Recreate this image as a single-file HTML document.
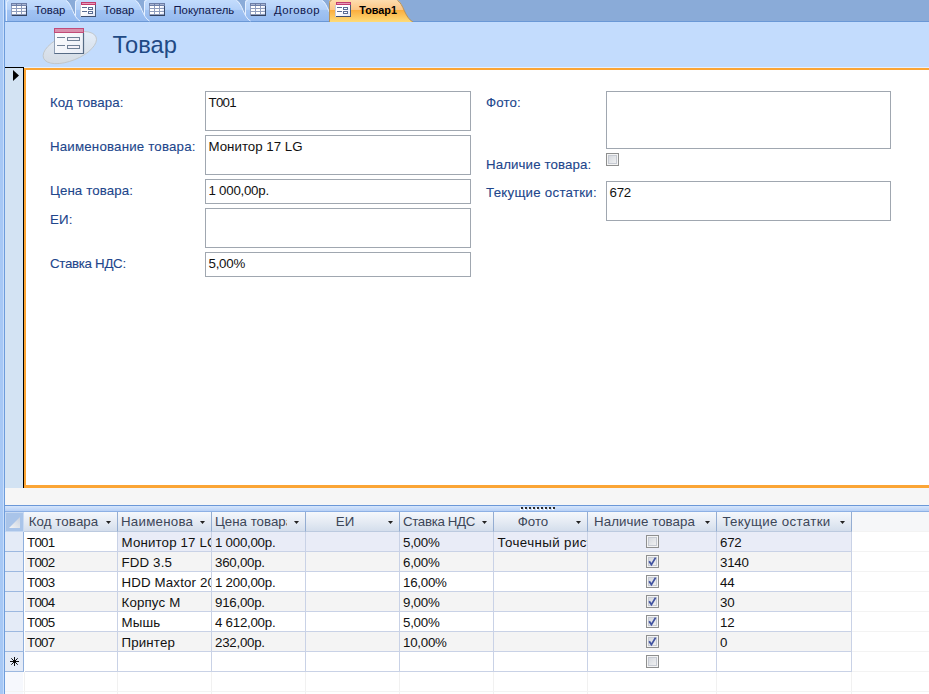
<!DOCTYPE html>
<html><head><meta charset="utf-8"><title>Товар1</title>
<style>
html,body{margin:0;padding:0}
body{width:929px;height:694px;overflow:hidden;background:#fff;position:relative;font-family:"Liberation Sans",sans-serif;}
.abs,.lbl,.tb,.hc,.c,.rs,.vl,.hl{position:absolute}
#leftstrip{left:0;top:0;width:5px;height:694px;background:linear-gradient(90deg,#a7c8f5 0,#a7c8f5 3px,#c8defc 3px,#c8defc 4px,#6d9cdb 4px)}
#tabbar{left:5px;top:0;width:924px;height:22px}
#hdr{left:5px;top:22px;width:924px;height:45px;background:#c3dcfd;border-bottom:1px solid #e6f0fe}
#title{left:112.5px;top:31px;font-size:23.7px;color:#1f4a85;line-height:28px;white-space:nowrap}
#hicon{left:38px;top:22px;width:68px;height:46px}
#detail{left:24px;top:68px;width:903px;height:415px;border-left:2px solid #fba535;border-top:2px solid #fba535;border-bottom:3px solid #fba535;background:#fff}
#recsel{left:5px;top:67px;width:19px;height:421px;background:#d3e3f3;border-top:1px solid #000;border-right:1px solid #000;box-sizing:border-box}
#recarrow{left:13px;top:70px;width:6px;height:11px;background:#000;clip-path:polygon(0 0,100% 50%,0 100%)}
.lbl{font-size:13.3px;color:#21468b;white-space:nowrap;line-height:16px;letter-spacing:0.1px;-webkit-text-stroke:0.1px #21468b}
.tb{border:1px solid #a0a7b0;background:#fff;box-sizing:border-box;font-size:13.3px;color:#111;line-height:16px;padding:3px 0 0 2.5px;white-space:nowrap}
.num{letter-spacing:-0.25px}
.code{letter-spacing:-0.7px}
#gap{left:5px;top:488px;width:924px;height:17px;background:#f6f6f6}
#split{left:5px;top:505px;width:924px;height:7px;background:linear-gradient(180deg,#6b98d8 0,#6b98d8 1px,#d6e6fc 1px,#b7d0f6 6px,#8db0e4 6px)}
#grip{left:520px;top:506px;width:40px;height:4px}
#grid{left:5px;top:512px;width:924px;height:182px;background:#fff}
.hc{top:512px;height:19px;background:linear-gradient(180deg,#f5f8fc 0,#e4eaf3 55%,#d4deec 100%);border-right:1px solid #94add2;border-bottom:1px solid #bccadf;font-size:13.3px;color:#3c4658;line-height:19px;white-space:nowrap;overflow:hidden}
.hc span{position:absolute;top:0;overflow:hidden;height:19px}
.hc i{position:absolute;top:9px;width:5px;height:3px;background:#222;clip-path:polygon(0 0,100% 0,50% 100%)}
.c{height:19px;border-right:1px solid #c9d2e6;border-bottom:1px solid #c9d2e6;font-size:13.3px;color:#111;line-height:20px;white-space:nowrap;overflow:hidden;box-sizing:content-box}
.c span{position:absolute;left:3.5px;top:1px}
.c span.code{left:2px}
.c span.num{left:3px}
.rs{left:5px;width:18px;height:19px;background:#e4ebf7;border-right:1px solid #8fafdc;border-bottom:1px solid #9cb8e0}
.cb{position:absolute;width:11px;height:11px;border:1px solid #8e8f8f;background:linear-gradient(135deg,#cfd3da 0,#f6f6f6 100%);box-shadow:inset 0 0 0 1px #f4f4f4,inset 0 0 0 2px #c6cad2}
.vl{width:1px;background:#f1f1f1}
.hl{height:1px;background:#f3f3f3}
</style></head><body>
<div id="leftstrip" class="abs"></div>
<svg id="tabbar" class="abs" width="924" height="22" viewBox="5 0 924 22">
<defs><linearGradient id="tg" x1="0" y1="0" x2="0" y2="1"><stop offset="0" stop-color="#c3dcfc"/><stop offset="0.45" stop-color="#b4d1f9"/><stop offset="0.47" stop-color="#a2c4f3"/><stop offset="1" stop-color="#95baef"/></linearGradient><linearGradient id="ag" x1="0" y1="0" x2="0" y2="1"><stop offset="0" stop-color="#fddcae"/><stop offset="0.44" stop-color="#fcc685"/><stop offset="0.47" stop-color="#fbae3e"/><stop offset="1" stop-color="#fedb78"/></linearGradient><linearGradient id="cg" x1="0" y1="0" x2="1" y2="1"><stop offset="0.3" stop-color="#fff"/><stop offset="1" stop-color="#cfd9f6"/></linearGradient><linearGradient id="fg" x1="0" y1="0" x2="1" y2="1"><stop offset="0.4" stop-color="#fff"/><stop offset="1" stop-color="#e0e5f5"/></linearGradient></defs>
<rect x="5" y="0" width="924" height="21" fill="#8aabd8"/>
<rect x="5" y="21" width="924" height="1" fill="#6a98d6"/>
<path d="M245 21V2Q245 0 247 0H322C328 3 329 17 336 21Z" fill="url(#tg)"/><path d="M245.5 21V2.5Q245.5 0.5 247.5 0.5M322 0.5C328 3.5 329 17.5 336 21" fill="none" stroke="#e6f0ff" stroke-width="1"/>
<path d="M144 21V2Q144 0 146 0H236.5C242.5 3 243.5 17 250.5 21Z" fill="url(#tg)"/><path d="M144.5 21V2.5Q144.5 0.5 146.5 0.5M236.5 0.5C242.5 3.5 243.5 17.5 250.5 21" fill="none" stroke="#e6f0ff" stroke-width="1"/>
<path d="M75 21V2Q75 0 77 0H135.5C141.5 3 142.5 17 149.5 21Z" fill="url(#tg)"/><path d="M75.5 21V2.5Q75.5 0.5 77.5 0.5M135.5 0.5C141.5 3.5 142.5 17.5 149.5 21" fill="none" stroke="#e6f0ff" stroke-width="1"/>
<rect x="5" y="0" width="2" height="21" fill="url(#tg)"/><path d="M6 21V2Q6 0 8 0H66C72 3 73 17 80 21Z" fill="url(#tg)"/><path d="M6.5 21V2.5Q6.5 0.5 8.5 0.5M66 0.5C72 3.5 73 17.5 80 21" fill="none" stroke="#e6f0ff" stroke-width="1"/>
<path d="M329 22V2Q329 0 331 0H397.5C403.5 3 404.5 17 413.0 22Z" fill="url(#ag)"/><path d="M329.5 22V2.5Q329.5 0.5 331.5 0.5M397.5 0.5C403.5 3.5 404.5 17.5 413.0 22" fill="none" stroke="#b8935a" stroke-width="1"/>
<g transform="translate(11,3)" shape-rendering="crispEdges"><rect x="0" y="0" width="16" height="13" fill="#8f9dbd"/><rect x="0" y="0" width="16" height="3" fill="#6d7fa8"/><rect x="1" y="1" width="4" height="1" fill="#aab6d2"/><rect x="6" y="1" width="4" height="1" fill="#aab6d2"/><rect x="11" y="1" width="4" height="1" fill="#aab6d2"/><rect x="1" y="3" width="4" height="2" fill="#fff"/><rect x="6" y="3" width="4" height="2" fill="#fff"/><rect x="11" y="3" width="4" height="2" fill="url(#cg)"/><rect x="1" y="6" width="4" height="2" fill="#fff"/><rect x="6" y="6" width="4" height="2" fill="#fff"/><rect x="11" y="6" width="4" height="2" fill="url(#cg)"/><rect x="1" y="9" width="4" height="2" fill="#fff"/><rect x="6" y="9" width="4" height="2" fill="#fff"/><rect x="11" y="9" width="4" height="2" fill="url(#cg)"/><rect x="15" y="3" width="1" height="10" fill="#3a4a68"/><rect x="1" y="12" width="15" height="1" fill="#34435f"/></g><g transform="translate(80,2)" shape-rendering="crispEdges"><rect x="0" y="3" width="16" height="12" fill="url(#fg)"/><rect x="0" y="3" width="1" height="12" fill="#c9cedb"/><rect x="1" y="0" width="15" height="3" fill="#c23c6e"/><rect x="2" y="1" width="13" height="1" fill="#e59ab8"/><rect x="15" y="3" width="1" height="12" fill="#4a5c7c"/><rect x="1" y="14" width="15" height="1" fill="#3f506f"/><rect x="2" y="5" width="5" height="1" fill="#5a6d94"/><rect x="8" y="5" width="5" height="3" fill="#5a6d94"/><rect x="9" y="6" width="3" height="1" fill="#fff"/><rect x="2" y="9" width="5" height="1" fill="#5a6d94"/><rect x="8" y="9" width="5" height="3" fill="#5a6d94"/><rect x="9" y="10" width="3" height="1" fill="#fff"/></g><g transform="translate(149,3)" shape-rendering="crispEdges"><rect x="0" y="0" width="16" height="13" fill="#8f9dbd"/><rect x="0" y="0" width="16" height="3" fill="#6d7fa8"/><rect x="1" y="1" width="4" height="1" fill="#aab6d2"/><rect x="6" y="1" width="4" height="1" fill="#aab6d2"/><rect x="11" y="1" width="4" height="1" fill="#aab6d2"/><rect x="1" y="3" width="4" height="2" fill="#fff"/><rect x="6" y="3" width="4" height="2" fill="#fff"/><rect x="11" y="3" width="4" height="2" fill="url(#cg)"/><rect x="1" y="6" width="4" height="2" fill="#fff"/><rect x="6" y="6" width="4" height="2" fill="#fff"/><rect x="11" y="6" width="4" height="2" fill="url(#cg)"/><rect x="1" y="9" width="4" height="2" fill="#fff"/><rect x="6" y="9" width="4" height="2" fill="#fff"/><rect x="11" y="9" width="4" height="2" fill="url(#cg)"/><rect x="15" y="3" width="1" height="10" fill="#3a4a68"/><rect x="1" y="12" width="15" height="1" fill="#34435f"/></g><g transform="translate(250,3)" shape-rendering="crispEdges"><rect x="0" y="0" width="16" height="13" fill="#8f9dbd"/><rect x="0" y="0" width="16" height="3" fill="#6d7fa8"/><rect x="1" y="1" width="4" height="1" fill="#aab6d2"/><rect x="6" y="1" width="4" height="1" fill="#aab6d2"/><rect x="11" y="1" width="4" height="1" fill="#aab6d2"/><rect x="1" y="3" width="4" height="2" fill="#fff"/><rect x="6" y="3" width="4" height="2" fill="#fff"/><rect x="11" y="3" width="4" height="2" fill="url(#cg)"/><rect x="1" y="6" width="4" height="2" fill="#fff"/><rect x="6" y="6" width="4" height="2" fill="#fff"/><rect x="11" y="6" width="4" height="2" fill="url(#cg)"/><rect x="1" y="9" width="4" height="2" fill="#fff"/><rect x="6" y="9" width="4" height="2" fill="#fff"/><rect x="11" y="9" width="4" height="2" fill="url(#cg)"/><rect x="15" y="3" width="1" height="10" fill="#3a4a68"/><rect x="1" y="12" width="15" height="1" fill="#34435f"/></g><g transform="translate(335,2)" shape-rendering="crispEdges"><rect x="0" y="3" width="16" height="12" fill="url(#fg)"/><rect x="0" y="3" width="1" height="12" fill="#c9cedb"/><rect x="1" y="0" width="15" height="3" fill="#c23c6e"/><rect x="2" y="1" width="13" height="1" fill="#e59ab8"/><rect x="15" y="3" width="1" height="12" fill="#4a5c7c"/><rect x="1" y="14" width="15" height="1" fill="#3f506f"/><rect x="2" y="5" width="5" height="1" fill="#5a6d94"/><rect x="8" y="5" width="5" height="3" fill="#5a6d94"/><rect x="9" y="6" width="3" height="1" fill="#fff"/><rect x="2" y="9" width="5" height="1" fill="#5a6d94"/><rect x="8" y="9" width="5" height="3" fill="#5a6d94"/><rect x="9" y="10" width="3" height="1" fill="#fff"/></g>
<text x="34.5" y="14" font-family="Liberation Sans, sans-serif" font-size="11.3" fill="#10164a">Товар</text><text x="103.5" y="14" font-family="Liberation Sans, sans-serif" font-size="11.3" fill="#10164a">Товар</text><text x="173.5" y="14" font-family="Liberation Sans, sans-serif" font-size="11.3" fill="#10164a">Покупатель</text><text x="274" y="14" font-family="Liberation Sans, sans-serif" font-size="11.3" fill="#10164a" letter-spacing="0.47">Договор</text><text x="359.3" y="14" font-family="Liberation Sans, sans-serif" font-size="10.8" font-weight="bold" fill="#000">Товар1</text>
</svg>
<div id="hdr" class="abs"></div>
<svg id="hicon" class="abs" width="68" height="46" viewBox="38 22 68 46">
<defs><linearGradient id="eg" x1="0" y1="1" x2="1" y2="0"><stop offset="0" stop-color="#d2d8df"/><stop offset="0.6" stop-color="#dde6f1"/><stop offset="1" stop-color="#e9f2fe"/></linearGradient>
<linearGradient id="bg2" x1="0" y1="0" x2="1" y2="1"><stop offset="0" stop-color="#ffffff"/><stop offset="1" stop-color="#e9edf6"/></linearGradient></defs>
<ellipse cx="69.8" cy="47.6" rx="28.3" ry="13" transform="rotate(-22 69.8 47.6)" fill="url(#eg)" stroke="#bfc3c6" stroke-width="0.8"/>
<rect x="54.5" y="28.5" width="29" height="25" fill="url(#bg2)" stroke="#8f9fb5"/>
<path d="M83.5 33V53.5H54.5" fill="none" stroke="#566b85" stroke-width="1.2"/>
<rect x="54" y="28" width="30" height="5" fill="#c24b78"/>
<rect x="55" y="29" width="28" height="3" fill="#d890ad"/>
<path d="M57 37.5H65M57 45.5H65" stroke="#6f8096" stroke-width="1" fill="none"/>
<rect x="67.5" y="37.5" width="12" height="3" fill="#f3f1f8" stroke="#6f8096"/>
<rect x="67.5" y="45.5" width="12" height="3" fill="#f3f1f8" stroke="#6f8096"/>
</svg>
<div id="title" class="abs">Товар</div>
<div id="recsel" class="abs"></div><div id="recarrow" class="abs"></div>
<div id="detail" class="abs"></div>
<div class="lbl" style="left:50px;top:95px">Код товара:</div>
<div class="lbl" style="left:50px;top:139px;letter-spacing:0.18px">Наименование товара:</div>
<div class="lbl" style="left:50px;top:183px">Цена товара:</div>
<div class="lbl" style="left:50px;top:212px">ЕИ:</div>
<div class="lbl" style="left:50px;top:256px;letter-spacing:-0.3px">Ставка НДС:</div>
<div class="tb code" style="left:205px;top:91px;width:266px;height:40px">T001</div>
<div class="tb " style="left:205px;top:135px;width:266px;height:40px">Монитор 17 LG</div>
<div class="tb num" style="left:205px;top:179px;width:266px;height:25px">1 000,00р.</div>
<div class="tb " style="left:205px;top:208px;width:266px;height:40px"></div>
<div class="tb num" style="left:205px;top:252px;width:266px;height:25px">5,00%</div>
<div class="lbl" style="left:486px;top:95px">Фото:</div>
<div class="lbl" style="left:486px;top:157px">Наличие товара:</div>
<div class="lbl" style="left:486px;top:185px;letter-spacing:0.25px">Текущие остатки:</div>
<div class="tb " style="left:606px;top:91px;width:285px;height:58px"></div>
<div class="cb" style="left:606px;top:153px"></div>
<div class="tb num" style="left:606px;top:181px;width:285px;height:40px">672</div>
<div id="gap" class="abs"></div>
<div id="split" class="abs"></div>
<svg id="grip" class="abs" width="40" height="4" viewBox="0 0 40 4"><rect x="0" y="2" width="2" height="2" fill="#fff"/><rect x="1" y="1" width="2" height="2" fill="#2b2b2b"/><rect x="4" y="2" width="2" height="2" fill="#fff"/><rect x="5" y="1" width="2" height="2" fill="#2b2b2b"/><rect x="8" y="2" width="2" height="2" fill="#fff"/><rect x="9" y="1" width="2" height="2" fill="#2b2b2b"/><rect x="12" y="2" width="2" height="2" fill="#fff"/><rect x="13" y="1" width="2" height="2" fill="#2b2b2b"/><rect x="16" y="2" width="2" height="2" fill="#fff"/><rect x="17" y="1" width="2" height="2" fill="#2b2b2b"/><rect x="20" y="2" width="2" height="2" fill="#fff"/><rect x="21" y="1" width="2" height="2" fill="#2b2b2b"/><rect x="24" y="2" width="2" height="2" fill="#fff"/><rect x="25" y="1" width="2" height="2" fill="#2b2b2b"/><rect x="28" y="2" width="2" height="2" fill="#fff"/><rect x="29" y="1" width="2" height="2" fill="#2b2b2b"/><rect x="32" y="2" width="2" height="2" fill="#fff"/><rect x="33" y="1" width="2" height="2" fill="#2b2b2b"/></svg>
<div id="grid" class="abs"></div>
<div class="abs" style="left:5px;top:512px;width:19px;height:20px;background:#a9c4e9;box-sizing:border-box;border:1px solid #c7d9f2"></div>
<svg class="abs" style="left:9px;top:517px" width="12" height="12" viewBox="0 0 12 12"><defs><linearGradient id="sg" x1="0" y1="1" x2="1" y2="0"><stop offset="0" stop-color="#f4f4f4"/><stop offset="1" stop-color="#c9d2e0"/></linearGradient></defs><path d="M11 0V11H0Z" fill="url(#sg)"/></svg>
<div class="hc" style="left:24px;width:1px;border-right:0"></div>
<div class="hc" style="left:25px;width:92px"><span style="left:0;width:77px;text-align:center;letter-spacing:0.1px">Код товара</span><i style="left:81px"></i></div>
<div class="hc" style="left:118px;width:93px"><span style="left:3px;width:72px;letter-spacing:0.25px">Наименование товара</span><i style="left:82px"></i></div>
<div class="hc" style="left:212px;width:93px"><span style="left:3px;width:72px">Цена товара</span><i style="left:82px"></i></div>
<div class="hc" style="left:306px;width:93px"><span style="left:0;width:78px;text-align:center">ЕИ</span><i style="left:82px"></i></div>
<div class="hc" style="left:400px;width:93px"><span style="left:0;width:78px;text-align:center;letter-spacing:-0.34px">Ставка НДС</span><i style="left:82px"></i></div>
<div class="hc" style="left:494px;width:93px"><span style="left:0;width:78px;text-align:center">Фото</span><i style="left:82px"></i></div>
<div class="hc" style="left:588px;width:128px"><span style="left:0;width:113px;text-align:center;letter-spacing:0.05px">Наличие товара</span><i style="left:117px"></i></div>
<div class="hc" style="left:717px;width:134px"><span style="left:0;width:119px;text-align:center;letter-spacing:0.33px">Текущие остатки</span><i style="left:123px"></i></div>
<div class="abs" style="left:852px;top:512px;width:77px;height:20px;background:#f6f7f9"></div>
<div class="rs" style="top:532px"></div>
<div class="c" style="left:25px;top:532px;width:92px;background:#fff"><span class="code">T001</span></div>
<div class="c" style="left:118px;top:532px;width:93px;background:#e9ecf7"><span style="letter-spacing:0.15px">Монитор 17 LG</span></div>
<div class="c" style="left:212px;top:532px;width:93px;background:#e9ecf7"><span class="num">1 000,00р.</span></div>
<div class="c" style="left:306px;top:532px;width:93px;background:#e9ecf7"></div>
<div class="c" style="left:400px;top:532px;width:93px;background:#e9ecf7"><span class="num">5,00%</span></div>
<div class="c" style="left:494px;top:532px;width:93px;background:#e9ecf7"><span style="letter-spacing:0.4px">Точечный рисунок</span></div>
<div class="c" style="left:588px;top:532px;width:128px;background:#e9ecf7"><div class="cb" style="left:58px;top:3px"></div></div>
<div class="c" style="left:717px;top:532px;width:134px;background:#e9ecf7"><span class="num">672</span></div>
<div class="rs" style="top:552px"></div>
<div class="c" style="left:25px;top:552px;width:92px;background:#f4f4f4"><span class="code">T002</span></div>
<div class="c" style="left:118px;top:552px;width:93px;background:#f4f4f4"><span style="letter-spacing:0.15px">FDD 3.5</span></div>
<div class="c" style="left:212px;top:552px;width:93px;background:#f4f4f4"><span class="num">360,00р.</span></div>
<div class="c" style="left:306px;top:552px;width:93px;background:#f4f4f4"></div>
<div class="c" style="left:400px;top:552px;width:93px;background:#f4f4f4"><span class="num">6,00%</span></div>
<div class="c" style="left:494px;top:552px;width:93px;background:#f4f4f4"></div>
<div class="c" style="left:588px;top:552px;width:128px;background:#f4f4f4"><div class="cb" style="left:58px;top:3px"><svg width="11" height="11" viewBox="0 0 11 11" style="position:absolute;left:0;top:0"><path d="M2.2 5.2L4.4 8.6L8.6 1.6" fill="none" stroke="#4052a0" stroke-width="1.8"/></svg></div></div>
<div class="c" style="left:717px;top:552px;width:134px;background:#f4f4f4"><span class="num">3140</span></div>
<div class="rs" style="top:572px"></div>
<div class="c" style="left:25px;top:572px;width:92px;background:#fff"><span class="code">T003</span></div>
<div class="c" style="left:118px;top:572px;width:93px;background:#fff"><span style="letter-spacing:0.15px">HDD Maxtor 20</span></div>
<div class="c" style="left:212px;top:572px;width:93px;background:#fff"><span class="num">1 200,00р.</span></div>
<div class="c" style="left:306px;top:572px;width:93px;background:#fff"></div>
<div class="c" style="left:400px;top:572px;width:93px;background:#fff"><span class="num">16,00%</span></div>
<div class="c" style="left:494px;top:572px;width:93px;background:#fff"></div>
<div class="c" style="left:588px;top:572px;width:128px;background:#fff"><div class="cb" style="left:58px;top:3px"><svg width="11" height="11" viewBox="0 0 11 11" style="position:absolute;left:0;top:0"><path d="M2.2 5.2L4.4 8.6L8.6 1.6" fill="none" stroke="#4052a0" stroke-width="1.8"/></svg></div></div>
<div class="c" style="left:717px;top:572px;width:134px;background:#fff"><span class="num">44</span></div>
<div class="rs" style="top:592px"></div>
<div class="c" style="left:25px;top:592px;width:92px;background:#f4f4f4"><span class="code">T004</span></div>
<div class="c" style="left:118px;top:592px;width:93px;background:#f4f4f4"><span style="letter-spacing:0.15px">Корпус М</span></div>
<div class="c" style="left:212px;top:592px;width:93px;background:#f4f4f4"><span class="num">916,00р.</span></div>
<div class="c" style="left:306px;top:592px;width:93px;background:#f4f4f4"></div>
<div class="c" style="left:400px;top:592px;width:93px;background:#f4f4f4"><span class="num">9,00%</span></div>
<div class="c" style="left:494px;top:592px;width:93px;background:#f4f4f4"></div>
<div class="c" style="left:588px;top:592px;width:128px;background:#f4f4f4"><div class="cb" style="left:58px;top:3px"><svg width="11" height="11" viewBox="0 0 11 11" style="position:absolute;left:0;top:0"><path d="M2.2 5.2L4.4 8.6L8.6 1.6" fill="none" stroke="#4052a0" stroke-width="1.8"/></svg></div></div>
<div class="c" style="left:717px;top:592px;width:134px;background:#f4f4f4"><span class="num">30</span></div>
<div class="rs" style="top:612px"></div>
<div class="c" style="left:25px;top:612px;width:92px;background:#fff"><span class="code">T005</span></div>
<div class="c" style="left:118px;top:612px;width:93px;background:#fff"><span style="letter-spacing:0.15px">Мышь</span></div>
<div class="c" style="left:212px;top:612px;width:93px;background:#fff"><span class="num">4 612,00р.</span></div>
<div class="c" style="left:306px;top:612px;width:93px;background:#fff"></div>
<div class="c" style="left:400px;top:612px;width:93px;background:#fff"><span class="num">5,00%</span></div>
<div class="c" style="left:494px;top:612px;width:93px;background:#fff"></div>
<div class="c" style="left:588px;top:612px;width:128px;background:#fff"><div class="cb" style="left:58px;top:3px"><svg width="11" height="11" viewBox="0 0 11 11" style="position:absolute;left:0;top:0"><path d="M2.2 5.2L4.4 8.6L8.6 1.6" fill="none" stroke="#4052a0" stroke-width="1.8"/></svg></div></div>
<div class="c" style="left:717px;top:612px;width:134px;background:#fff"><span class="num">12</span></div>
<div class="rs" style="top:632px"></div>
<div class="c" style="left:25px;top:632px;width:92px;background:#f4f4f4"><span class="code">T007</span></div>
<div class="c" style="left:118px;top:632px;width:93px;background:#f4f4f4"><span style="letter-spacing:0.15px">Принтер</span></div>
<div class="c" style="left:212px;top:632px;width:93px;background:#f4f4f4"><span class="num">232,00р.</span></div>
<div class="c" style="left:306px;top:632px;width:93px;background:#f4f4f4"></div>
<div class="c" style="left:400px;top:632px;width:93px;background:#f4f4f4"><span class="num">10,00%</span></div>
<div class="c" style="left:494px;top:632px;width:93px;background:#f4f4f4"></div>
<div class="c" style="left:588px;top:632px;width:128px;background:#f4f4f4"><div class="cb" style="left:58px;top:3px"><svg width="11" height="11" viewBox="0 0 11 11" style="position:absolute;left:0;top:0"><path d="M2.2 5.2L4.4 8.6L8.6 1.6" fill="none" stroke="#4052a0" stroke-width="1.8"/></svg></div></div>
<div class="c" style="left:717px;top:632px;width:134px;background:#f4f4f4"><span class="num">0</span></div>
<div class="rs" style="top:652px"><svg style="position:absolute;left:5px;top:5px" width="9" height="9" viewBox="0 0 9 9"><path d="M0 4.5H9M4.5 0V9M1.3 1.3L7.7 7.7M7.7 1.3L1.3 7.7" stroke="#000" stroke-width="0.95" fill="none"/><circle cx="4.5" cy="4.5" r="1.1" fill="#000"/></svg></div>
<div class="c" style="left:25px;top:652px;width:92px;background:#fff"></div>
<div class="c" style="left:118px;top:652px;width:93px;background:#fff"></div>
<div class="c" style="left:212px;top:652px;width:93px;background:#fff"></div>
<div class="c" style="left:306px;top:652px;width:93px;background:#fff"></div>
<div class="c" style="left:400px;top:652px;width:93px;background:#fff"></div>
<div class="c" style="left:494px;top:652px;width:93px;background:#fff"></div>
<div class="c" style="left:588px;top:652px;width:128px;background:#fff"><div class="cb" style="left:58px;top:3px"></div></div>
<div class="c" style="left:717px;top:652px;width:134px;background:#fff"></div>
<div class="abs" style="left:5px;top:672px;width:18px;height:22px;background:#f6f8fd"></div>
<div class="vl" style="left:24px;top:672px;height:22px"></div>
<div class="vl" style="left:117px;top:672px;height:22px"></div>
<div class="vl" style="left:211px;top:672px;height:22px"></div>
<div class="vl" style="left:305px;top:672px;height:22px"></div>
<div class="vl" style="left:399px;top:672px;height:22px"></div>
<div class="vl" style="left:493px;top:672px;height:22px"></div>
<div class="vl" style="left:587px;top:672px;height:22px"></div>
<div class="vl" style="left:716px;top:672px;height:22px"></div>
<div class="vl" style="left:851px;top:672px;height:22px"></div>
<div class="hl" style="left:5px;top:691px;width:924px"></div>
<div class="hl" style="left:852px;top:531px;width:77px"></div>
<div class="hl" style="left:852px;top:551px;width:77px"></div>
<div class="hl" style="left:852px;top:571px;width:77px"></div>
<div class="hl" style="left:852px;top:591px;width:77px"></div>
<div class="hl" style="left:852px;top:611px;width:77px"></div>
<div class="hl" style="left:852px;top:631px;width:77px"></div>
<div class="hl" style="left:852px;top:651px;width:77px"></div>
<div class="hl" style="left:852px;top:671px;width:77px"></div>
</body></html>
